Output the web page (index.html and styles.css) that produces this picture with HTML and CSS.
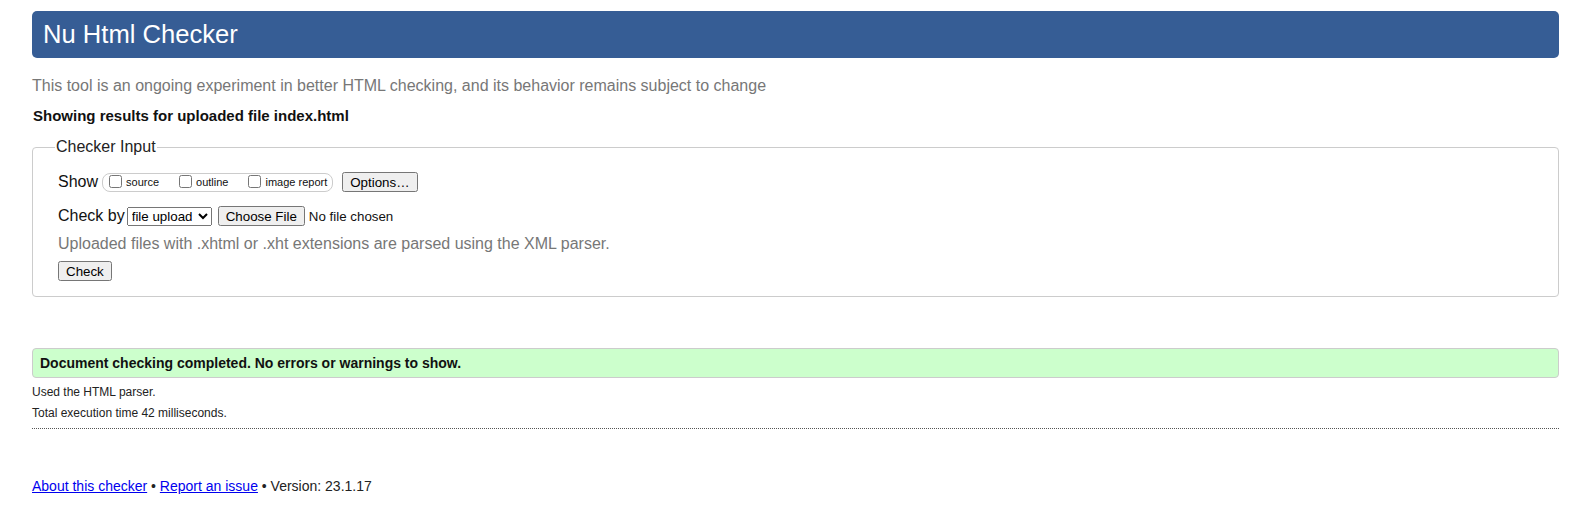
FILE: index.html
```html
<!DOCTYPE html>
<html>
<head>
<meta charset="utf-8">
<title>Nu Html Checker</title>
<link rel="stylesheet" href="styles.css">
</head>
<body>
<h1 class="title">Nu Html Checker</h1>
<p class="intro">This tool is an ongoing experiment in better HTML checking, and its behavior remains subject to change</p>
<p class="showing">Showing results for uploaded file index.html</p>
<fieldset class="input">
  <legend class="legend">Checker Input</legend>
  <div class="row">
    <span class="label label-show">Show</span>
    <span class="showbox">
      <label class="opt"><input type="checkbox" class="cb">source</label>
      <label class="opt"><input type="checkbox" class="cb">outline</label>
      <label class="opt"><input type="checkbox" class="cb">image report</label>
    </span>
    <button class="btn">Options…</button>
  </div>
  <div class="row row2">
    <span class="label">Check by</span>
    <select class="sel"><option>file upload</option></select>
    <span class="file"><button class="btn btn-file">Choose File</button><span class="nofile">No file chosen</span></span>
  </div>
  <p class="note">Uploaded files with .xhtml or .xht extensions are parsed using the XML parser.</p>
  <button class="btn btn-check">Check</button>
</fieldset>
<p class="success">Document checking completed. No errors or warnings to show.</p>
<p class="small">Used the HTML parser.</p>
<p class="small small2">Total execution time 42 milliseconds.</p>
<hr class="dots">
<p class="footer"><a href="#" class="lnk">About this checker</a> • <a href="#" class="lnk">Report an issue</a> • Version: 23.1.17</p>
</body>
</html>
```
FILE: styles.css
```css
html, body { margin: 0; padding: 0; background: #fff; }
body {
  font-family: "Liberation Sans", Arial, sans-serif;
  color: #111;
  padding: 11px 15px 0 32px;
}
.title {
  margin: 0;
  background: #365d95;
  color: #fff;
  font-weight: normal;
  font-size: 25.6px;
  line-height: 47px;
  height: 47px;
  padding: 0 11px;
  border-radius: 5px;
}
.intro {
  margin: 18px 0 0 0;
  font-size: 16px;
  line-height: 20px;
  color: #777;
}
.showing {
  margin: 10px 0 0 1px;
  font-size: 15px;
  font-weight: bold;
  line-height: 20px;
  color: #111;
}
.input {
  margin: 12px 0 0 0;
  border: 1px solid #ccc;
  border-radius: 4px;
  padding: 6px 25px 15px 25px;
}
.legend {
  font-size: 16px;
  padding: 0 1px;
  margin-left: -3px;
  color: #222;
}
.row {
  display: flex;
  align-items: center;
  height: 22px;
  margin-top: 9px;
}
.row2 { margin-top: 12px; }
.label { font-size: 16px; margin-right: 2px; color: #111; }
.label-show { margin-right: 4px; }
.showbox {
  display: inline-flex;
  align-items: center;
  border: 1px solid #ccc;
  border-radius: 8px;
  height: 17px;
  padding: 0 5px 0 6px;
  margin-right: 9px;
}
.opt {
  font-size: 11px;
  display: inline-flex;
  align-items: center;
  margin-right: 20px;
  color: #111;
}
.opt:last-child { margin-right: 0; }
.cb { margin: 0 4px 2px 0; width: 13px; height: 13px; }
.btn {
  font-family: "Liberation Sans", Arial, sans-serif;
  font-size: 13.33px;
  height: 20px;
  padding: 0 6px;
  margin: 0;
}
.sel {
  font-family: "Liberation Sans", Arial, sans-serif;
  font-size: 13.33px;
  height: 19px;
  width: 85px;
  margin: 0 6px 0 0;
}
.file { display: inline-flex; align-items: center; font-size: 13.33px; }
.btn-file { margin-right: 4px; }
.nofile { font-size: 13.33px; }
.note {
  margin: 7px 0 0 0;
  font-size: 16px;
  line-height: 20px;
  color: #777;
}
.btn-check { margin-top: 7px; }
.success {
  margin: 51px 0 0 0;
  background: #ccffcc;
  border: 1px solid #ccc;
  border-radius: 4px;
  font-size: 14px;
  font-weight: bold;
  line-height: 28px;
  padding: 0 7px;
  color: #111;
}
.small {
  margin: 6px 0 0 0;
  font-size: 12px;
  line-height: 16px;
  color: #222;
}
.small2 { margin-top: 5px; }
.dots {
  margin: 7px 0 0 0;
  border: none;
  border-top: 1px dotted #555;
  height: 0;
}
.footer {
  margin: 48px 0 0 0;
  font-size: 14px;
  line-height: 18px;
  color: #222;
}
.lnk { color: #00e; text-decoration: underline; }
```
